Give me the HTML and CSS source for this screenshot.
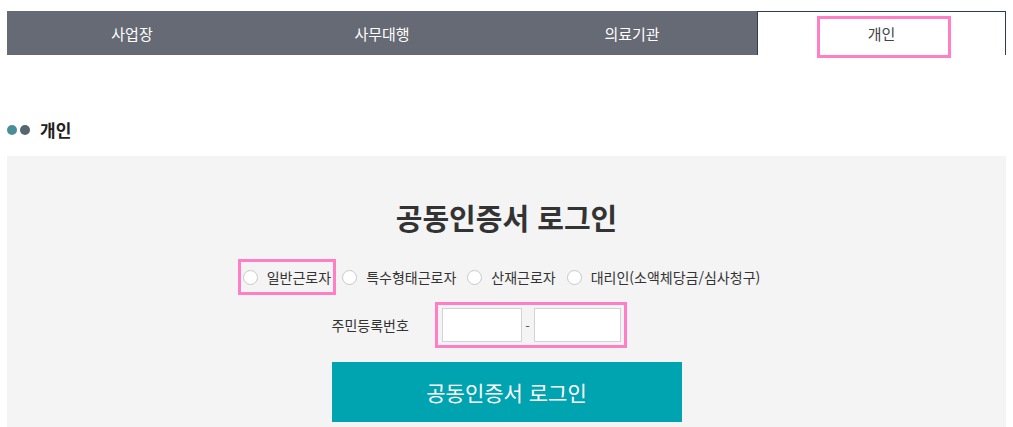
FILE: index.html
```html
<!DOCTYPE html>
<html lang="ko">
<head>
<meta charset="utf-8">
<title>개인 로그인</title>
<link rel="stylesheet" href="styles.css">
</head>
<body>
<div class="page">
  <nav class="tabs">
    <a class="tab">사업장</a>
    <a class="tab">사무대행</a>
    <a class="tab">의료기관</a>
    <a class="tab active"><span class="mark-tab"></span>개인</a>
  </nav>

  <h2 class="heading"><span class="dot dot1"></span><span class="dot dot2"></span><span class="heading-text">개인</span></h2>

  <section class="panel">
    <h1 class="title">공동인증서 로그인</h1>
    <div class="radios">
      <label class="opt marked"><span class="radio"></span>일반근로자</label>
      <label class="opt"><span class="radio"></span>특수형태근로자</label>
      <label class="opt"><span class="radio"></span>산재근로자</label>
      <label class="opt"><span class="radio"></span>대리인(소액체당금/심사청구)</label>
    </div>
    <div class="form">
      <div class="idrow">
        <span class="idlabel">주민등록번호</span>
        <span class="inputs">
          <input class="box box1" type="text">
          <span class="dash">-</span>
          <input class="box box2" type="password">
        </span>
      </div>
      <button class="btn" type="button">공동인증서 로그인</button>
    </div>
  </section>
</div>
</body>
</html>
```
FILE: styles.css
```css
* { box-sizing: border-box; }
html, body { margin: 0; padding: 0; background: #fff; }
body {
  font-family: "Noto Sans CJK KR", "Noto Sans", sans-serif;
  color: #333;
  overflow: hidden;
}
.page { padding: 11px 7px 0 7px; }

.tabs { display: flex; height: 44px; }
.tab {
  flex: 0 0 250px;
  display: flex;
  align-items: center;
  justify-content: center;
  background: #666a74;
  color: #fff;
  font-size: 15px;
  text-decoration: none;
}
.tab.active {
  flex: 1 1 auto;
  position: relative;
  background: #fff;
  color: #444;
  border: 1px solid #2e3e4e;
  border-bottom: none;
}
.mark-tab {
  position: absolute;
  left: 59px;
  top: 4px;
  width: 134px;
  height: 42px;
  border: 3px solid #ff7ec4;
}

.heading {
  display: flex;
  align-items: center;
  height: 20px;
  margin: 65px 0 16px 0;
  font-size: 17px;
  font-weight: 700;
  color: #222;
}
.dot { width: 10px; height: 10px; border-radius: 50%; display: inline-block; }
.dot1 { background: #4b8e98; margin-left: 0; }
.dot2 { background: #556670; margin-left: 3px; }
.heading-text { margin-left: 10px; line-height: 20px; }

.panel {
  background: #f4f4f4;
  padding: 42px 0 10px 0;
  min-height: 280px;
}
.title {
  margin: 0;
  text-align: center;
  font-size: 29px;
  line-height: 38px;
  font-weight: 700;
  color: #333;
}
.radios {
  display: flex;
  justify-content: center;
  align-items: center;
  gap: 11px;
  margin-top: 28px;
  padding-right: 10px;
  font-size: 14px;
  color: #333;
}
.opt {
  display: inline-flex;
  align-items: center;
  height: 26px;
  gap: 9px;
}
.opt.marked { outline: 3px solid #ff7ec4; outline-offset: 2px; }
.radio {
  width: 15px;
  height: 15px;
  border-radius: 50%;
  background: #fff;
  border: 1px solid #c8c8c8;
  display: inline-block;
}

.form { width: 350px; margin: 18px auto 0 auto; }
.idrow { display: flex; align-items: center; height: 34px; }
.idlabel { width: 106px; font-size: 14px; color: #333; }
.inputs {
  display: inline-flex;
  align-items: center;
  padding: 3px 3px 3px 4px;
  outline: 3px solid #ff7ec4;
}
.box {
  height: 34px;
  border: 1px solid #d2d2d2;
  background: #fff;
  padding: 0;
  margin: 0;
}
.box1 { width: 80px; }
.box2 { width: 87px; }
.dash { width: 12px; text-align: center; font-size: 13px; color: #555; }

.btn {
  display: block;
  width: 350px;
  height: 60px;
  margin-top: 20px;
  border: none;
  background: #00a3b0;
  color: #fff;
  font-family: "Noto Sans CJK KR", "Noto Sans", sans-serif;
  font-size: 21px;
  padding: 0;
}
```
